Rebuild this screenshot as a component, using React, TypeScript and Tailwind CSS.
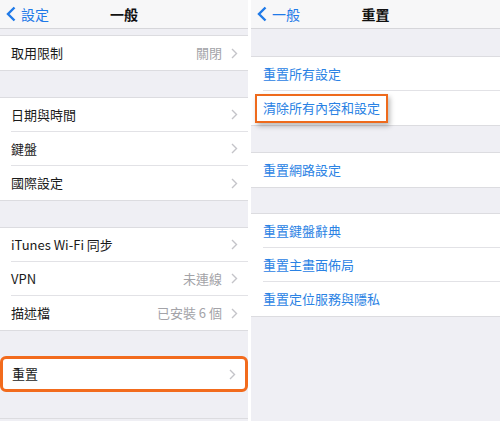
import React from 'react'

const font = { fontFamily: '"Noto Sans CJK TC", "Liberation Sans", sans-serif' }

function Chevron() {
  return (
    <svg width="7" height="11" viewBox="0 0 7 11" className="shrink-0">
      <polyline points="1,1 5.5,5.5 1,10" fill="none" stroke="#c4c4c9" strokeWidth="1.4" />
    </svg>
  )
}

function BackChevron() {
  return (
    <svg width="10" height="16" viewBox="0 0 10 16" className="shrink-0">
      <polyline points="8.5,1.5 2,8 8.5,14.5" fill="none" stroke="#1f7ae8" strokeWidth="2.4" />
    </svg>
  )
}

function NavBar({ back, title }: { back: string; title: string }) {
  return (
    <div className="relative flex h-[29px] items-center border-b border-[#d6d6da] bg-[#f7f7f8]">
      <div className="flex items-center gap-[5px] pl-[6px] text-[14px] text-[#1f7ae8]">
        <BackChevron />
        <span>{back}</span>
      </div>
      <div className="absolute inset-x-0 top-0 flex h-full items-center justify-center text-[14px] font-semibold text-[#111]">
        {title}
      </div>
    </div>
  )
}

function Row({ label, value, last }: { label: string; value?: string; last?: boolean }) {
  return (
    <div className="flex h-[34px] items-stretch bg-white pl-[11px]">
      <div className={`flex flex-1 items-center pr-[10px] ${last ? '' : 'border-b border-[#e2e2e6]'}`}>
        <span className="flex-1 text-[13px] text-[#1a1a1a]">{label}</span>
        {value && <span className="mr-[9px] text-[13px] text-[#a3a3a8]">{value}</span>}
        <Chevron />
      </div>
    </div>
  )
}

function Group({ children }: { children: React.ReactNode }) {
  return <div className="border-y border-[#dcdce0] bg-white">{children}</div>
}

function BlueRow({ label, last, highlight }: { label: string; last?: boolean; highlight?: boolean }) {
  return (
    <div className="flex h-[34px] items-stretch bg-white pl-[12px]">
      <div className={`flex flex-1 items-center ${last ? '' : 'border-b border-[#e2e2e6]'}`}>
        {highlight ? (
          <span className="-ml-[8px] flex h-[29px] items-center border-2 border-[#ee6a1c] bg-white px-[6px] text-[13px] text-[#2a82e4] shadow-[2px_3px_5px_rgba(0,0,0,0.28)]">
            {label}
          </span>
        ) : (
          <span className="text-[13px] text-[#2a82e4]">{label}</span>
        )}
      </div>
    </div>
  )
}

export default function App() {
  return (
    <div className="flex h-[421px] w-[500px] gap-[3px] bg-white" style={font}>
      <div className="flex w-[248px] flex-col bg-[#efeff4]">
        <NavBar back="設定" title="一般" />
        <div className="h-[6px]" />
        <Group>
          <Row label="取用限制" value="關閉" last />
        </Group>
        <div className="h-[26px]" />
        <Group>
          <Row label="日期與時間" />
          <Row label="鍵盤" />
          <Row label="國際設定" last />
        </Group>
        <div className="h-[26px]" />
        <Group>
          <Row label="iTunes Wi-Fi 同步" />
          <Row label="VPN" value="未連線" />
          <Row label="描述檔" value="已安裝 6 個" last />
        </Group>
        <div className="h-[25px]" />
        <div className="flex h-[36px] items-center rounded-[6px] border-[3px] border-[#f26b1d] bg-white pl-[9px] pr-[9px]">
          <span className="flex-1 text-[13px] text-[#1a1a1a]">重置</span>
          <Chevron />
        </div>
        <div className="flex-1" />
        <div className="h-[3px] border-t border-[#dcdce0]" />
      </div>
      <div className="flex flex-1 flex-col bg-[#efeff4]">
        <NavBar back="一般" title="重置" />
        <div className="h-[27px]" />
        <Group>
          <BlueRow label="重置所有設定" />
          <BlueRow label="清除所有內容和設定" highlight last />
        </Group>
        <div className="h-[26px]" />
        <Group>
          <BlueRow label="重置網路設定" last />
        </Group>
        <div className="h-[25px]" />
        <Group>
          <BlueRow label="重置鍵盤辭典" />
          <BlueRow label="重置主畫面佈局" />
          <BlueRow label="重置定位服務與隱私" last />
        </Group>
        <div className="flex-1" />
      </div>
    </div>
  )
}
